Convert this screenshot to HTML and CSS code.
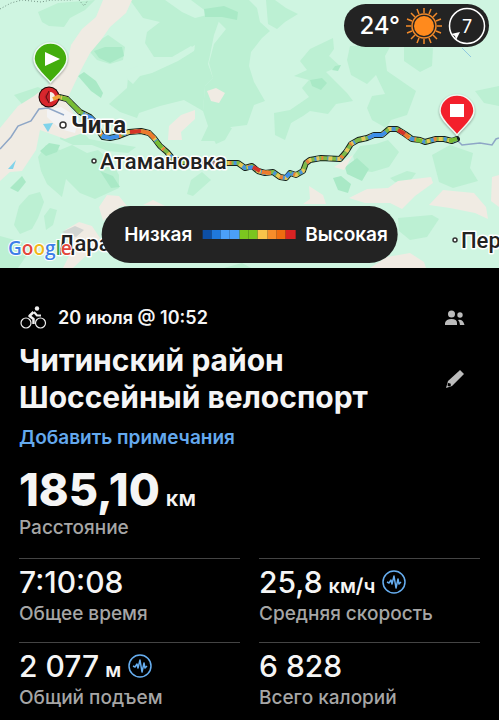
FILE: index.html
```html
<!DOCTYPE html>
<html lang="ru">
<head>
<meta charset="utf-8">
<meta name="viewport" content="width=device-width, initial-scale=1">
<title>Читинский район Шоссейный велоспорт</title>
<link rel="stylesheet" href="styles.css">
</head>
<body>
<section class="map" aria-label="Карта маршрута">
  <svg class="map-canvas" viewBox="0 0 499 268" preserveAspectRatio="xMidYMid slice">
    <defs>
      <path id="route" d="M54 98L59 97 67 99 73 105 80 112 90 117 96 123 99 131 103 137 110 138 119 136 129 132 141 131 149 133 154 138 160 146 167 152 172 158 183 162 205 164 226 163 238 163 245 168 252 166 258 171 265 173 273 172 280 177 286 178 290 173 296 175 303 171 306 163 310 160 321 158 340 159 346 152 351 144 358 140 367 138 374 135 382 135 389 129 397 129 405 134 412 139 420 140 425 142 436 139 444 139 452 141 457 139"/>
    </defs>
    <rect class="land" width="499" height="268"/>
    <g class="forest">
      <path d="M38 12L58 3 95 0 85 10 70 18 64 27 49 26 42 22Z"/>
      <path d="M130 0L165 0 182 12 195 18 215 13 219 21 214 35 210 55 208 64 213 78 205 86 203 111 184 100 160 106 139 113 137 118 120 112 109 104 127 88 128 77 138 74 151 69 179 59 195 49 191 46 172 57 154 57 145 43 147 32 160 22 143 18Z"/>
      <path d="M90 52L100 40 108 35 125 47 123 60 110 64 97 60Z"/>
      <path d="M191 0H249L257 8 260 22 270 31 262 38 251 52 249 66 254 82 265 101 254 105 247 125 231 127 220 141 201 141 208 126 203 111 205 86 213 78 209 63 214 44 226 29 215 18Z"/>
      <path d="M266 0L275 0 286 8 298 14 285 22 277 29 268 24Z"/>
      <path d="M310 49L333 38 334 49 329 56 340 66 326 72 334 80 347 93 353 101 336 104 328 114 310 111 303 116 291 123 285 140 275 135 274 113 290 110 309 97 302 88 309 80 294 76 307 70 300 61Z"/>
      <path d="M350 46L391 45 385 56 387 71 416 91 407 115 391 120 386 128 372 120 367 108 372 96 385 94 376 75 367 84 351 75 347 60Z"/>
      <path d="M404 47L433 48 432 66 420 72 404 61Z"/>
      <path d="M475 91L499 86V106L484 103Z"/>
      <path d="M14 95L38 87 46 91 37 101 22 104Z"/>
      <path d="M38 157L46 145 60 150 72 145 87 153 98 150 111 161 119 175 119 188 95 199 80 193 66 179 62 197 47 184 41 171Z"/>
      <path d="M62 131L78 127 89 139 105 142 136 147 128 153 108 151 92 145 73 145 60 139Z"/>
      <path d="M202 172L211 180 193 196 187 194 191 180Z"/>
      <path d="M208 128H232L225 140 216 144Z"/>
      <path d="M19 206L29 195 40 192 44 202 38 218 32 229 20 234 14 225Z"/>
      <path d="M44 216L50 208 57 210 53 225 46 230Z"/>
      <path d="M0 236L22 242 27 255 18 268H0Z"/>
      <path d="M353 156L360 146 376 144 388 140 399 152 389 167 372 172 357 170Z"/>
      <path d="M432 155L450 145 473 153 470 168 478 181 453 188 439 182Z"/>
      <path d="M398 218L432 215 439 219 427 237 410 240 399 231Z"/>
      <path d="M390 178L407 171 416 173 411 180 395 182Z"/>
      <path d="M224 268L242 263 251 268Z"/>
    </g>
    <g class="forest-deep">
      <path d="M94 51L105 47 122 47 124 56 110 63 99 58Z"/>
      <path d="M78 76L84 72 96 81 103 93 101 98 91 91Z"/>
      <path d="M204 9L224 6 238 12 237 20 222 17 205 17Z"/>
      <path d="M310 80L322 78 327 83 321 90 312 86Z"/>
      <path d="M345 167L357 158 369 169 362 181 347 174Z"/>
      <path d="M333 178L341 176 351 184 348 193 338 190Z"/>
      <path d="M40 151L49 143 60 145 57 152 46 156Z"/>
      <path d="M10 188L22 176 26 182 18 192Z"/>
      <path d="M100 171L113 176 120 187 111 188Z"/>
      <path d="M335 66L341 65 338 71 332 70Z"/>
    </g>
    <g class="built">
      <path d="M103 0H132L126 13 110 27 101 40 90 53 81 70 71 91 66 102 77 118 86 132 65 139 40 130 36 150 22 171 10 172 0 181V128L18 106 34 96 53 81 67 64 71 45 82 29 96 17Z"/>
      <path d="M207 91L216 88 225 93 219 103 211 101Z"/>
      <path d="M195 110L195 119 181 132 182 140 168 140 169 126 181 115Z"/>
      <path d="M99 207L107 195 119 196 127 206H121L103 221Z"/>
      <path d="M65 230L79 222 92 226 100 238 92 250 73 268H63L72 250Z"/>
      <path d="M143 205L153 200 165 206Z"/>
      <path d="M309 186L323 195 326 204 303 204 310 199Z"/>
      <path d="M349 198L367 189 388 188 398 181 431 177 433 183 415 196 402 209 390 203 365 203Z"/>
      <path d="M429 205L443 190 474 193 486 207 488 219 475 213 450 208Z"/>
      <path d="M492 177L499 175V207L491 201Z"/>
      <path d="M334 167L353 155 344 170Z"/>
      <path d="M387 257L410 253 424 262 426 268H370Z"/>
    </g>
    <path class="clearing" d="M127 70L138 66 150 68 179 55 195 45 194 51 178 61 152 73 140 76 133 84 126 78Z"/>
    <path class="town" d="M47 110L61 107 79 118 75 133 60 129 47 117Z"/>
    <path class="rock" d="M62 232L75 226 84 230 76 237Z"/>
    <g class="water">
      <path d="M43 124L53 123 48 132Z"/>
      <path d="M8 169L16 160 13 169Z"/>
    </g>
    <path class="river" d="M0 149L11 137 18 126 31 121 39 109 48 108 64 115"/>
    <path class="river" d="M457 140L462 145 480 143 492 145 496 139 499 138"/>
    <path class="stream" d="M462 48L471 57"/>
    <path class="boundary" d="M0 9L11 3 22 0 41 2 52 0 73 0M79 0L84 6 88 0"/>

    <use class="route-edge" href="#route"/>
    <use class="route-base" href="#route"/>
    <use class="route-blue" href="#route"/>
    <use class="route-yellow" href="#route"/>
    <use class="route-orange" href="#route"/>
    <g class="route-span">
      <path class="c-green" d="M62 98L67 99 73 105 80 112M156 141L162 148M416 140L422 141M449 141L457 139"/>
      <path class="c-blue" d="M85 115L90 117 94 121M102 136L110 138 119 136M248 168L253 167M286 177L290 173M368 138L374 135 382 135 386 132"/>
      <path class="c-red" d="M94 121L97 124M130 132L141 131M253 167L260 171M398 130L405 134"/>
      <path class="c-orange" d="M141 131L149 133 154 138M262 172L271 173M405 134L409 138"/>
    </g>

    <g class="start">
      <circle class="start-edge" cx="49" cy="97" r="10.500"/>
      <circle class="start-ring" cx="49" cy="97" r="7"/>
      <path class="start-core" d="M49 91L46 97 49 103"/>
      <path class="start-half" d="M50 92A5 5 0 0 1 50 102Z"/>
      <path class="start-tail" d="M53 99L60 96"/>
    </g>
    <g class="pin">
      <path class="pin-green" d="M50.500 82.500C46 77 34 68 34 59A16.500 16 0 0 1 67 59C67 68 55 77 50.500 82.500Z"/>
      <path class="pin-mark" d="M45 52L60 59 45 66Z"/>
    </g>
    <g class="pin">
      <path class="pin-red" d="M457 135C453 129 440 120 440 111A17 16 0 0 1 474 111C474 120 461 129 457 135Z"/>
      <path class="pin-mark" d="M450 104H464V117H450Z"/>
    </g>

    <circle class="place-dot" cx="63" cy="125" r="3"/>
    <circle class="place-dot" cx="94" cy="161" r="2"/>
    <circle class="place-dot" cx="455" cy="240" r="2"/>
    <text class="place place-city" x="71" y="133">Чита</text>
    <text class="place" x="100" y="169">Атамановка</text>
    <text class="place" x="58" y="251">Дара</text>
    <text class="place" x="461" y="248">Пер</text>
    <text class="google" x="8" y="255"><tspan class="g-blue">G</tspan><tspan class="g-red">o</tspan><tspan class="g-yellow">o</tspan><tspan class="g-blue">g</tspan><tspan class="g-green">l</tspan><tspan class="g-red">e</tspan></text>
  </svg>

  <div class="weather">
    <span>24°</span>
    <svg class="sun" viewBox="-19 -19 38 38">
      <circle class="sun-core" r="10"/>
      <circle class="sun-ring" r="12"/>
      <path class="sun-rays" d="M0-13V-18M0 13V18M-13 0H-18M13 0H18M5-12L7-17M-5-12L-7-17M5 12L7 17M-5 12L-7 17M12-5L17-7M12 5L17 7M-12-5L-17-7M-12 5L-17 7M9-9L13-13M-9-9L-13-13M9 9L13 13M-9 9L-13 13"/>
    </svg>
    <svg class="wind" viewBox="-19 -19 38 38">
      <circle class="wind-ring" r="17.500"/>
      <path class="wind-arrow" d="M-16 8L-7 6-11 14-12 10Z"/>
      <text class="wind-speed" x="0" y="7">7</text>
    </svg>
  </div>

  <div class="legend">
    <span>Низкая</span>
    <div class="scale"><i class="s1"></i><i class="s2"></i><i class="s3"></i><i class="s3"></i><i class="s4"></i><i class="s4"></i><i class="s5"></i><i class="s6"></i><i class="s7"></i><i class="s8"></i></div>
    <span>Высокая</span>
  </div>
</section>

<main class="details">
  <div class="row meta">
    <svg class="bike" viewBox="0 0 28 24">
      <circle class="wheel" cx="7" cy="17" r="5"/>
      <circle class="wheel" cx="21.500" cy="17" r="5"/>
      <circle class="rider" cx="18" cy="2.500" r="2.200"/>
      <path class="torso" d="M14.500 6L10.500 10 14.500 13V18"/>
      <path class="arm" d="M15 6L18 9.500H22"/>
    </svg>
    <span class="date">20 июля @ 10:52</span>
    <button class="icon-button" aria-label="Участники">
      <svg class="people" viewBox="0 0 20 16"><circle cx="6.500" cy="4" r="3.500"/><circle cx="15" cy="5" r="2.700"/><path d="M0 15V13Q1 9 6.500 9T12 13V15ZM13 10Q18 9 19.500 15H15Q15 12 13 10Z"/></svg>
    </button>
  </div>
  <div class="row heading">
    <h1>Читинский район Шоссейный велоспорт</h1>
    <button class="icon-button" aria-label="Изменить">
      <svg class="pencil" viewBox="0 0 20 20"><path fill-rule="evenodd" d="M1 19L3 12 14 2 15 1 19 5 18 6 7 17ZM3 14L2.500 16.500 4 17.500 6 16.500 5.500 14.500Z"/></svg>
    </button>
  </div>
  <a class="notes" href="#notes">Добавить примечания</a>
  <div class="stat distance">
    <div class="value">185,10<small>км</small></div>
    <div class="label">Расстояние</div>
  </div>
  <div class="stats">
    <div class="stat">
      <div class="value">7:10:08</div>
      <div class="label">Общее время</div>
    </div>
    <div class="stat">
      <div class="value">25,8<small>км/ч</small><button class="pulse" aria-label="График скорости"><svg viewBox="0 0 24 24"><circle cx="12" cy="12" r="11"/><path d="M5 12L7 13 9 10 10 14 12 6 14 18 16 9 17 14 19 12"/></svg></button></div>
      <div class="label">Средняя скорость</div>
    </div>
    <div class="stat">
      <div class="value">2 077<small>м</small><button class="pulse" aria-label="График подъема"><svg viewBox="0 0 24 24"><circle cx="12" cy="12" r="11"/><path d="M5 12L7 13 9 10 10 14 12 6 14 18 16 9 17 14 19 12"/></svg></button></div>
      <div class="label">Общий подъем</div>
    </div>
    <div class="stat">
      <div class="value">6 828</div>
      <div class="label">Всего калорий</div>
    </div>
  </div>
</main>
</body>
</html>
```
FILE: styles.css
```css
* { box-sizing: border-box; }
body {
  margin: 0;
  background: #000;
  color: #f5f5f5;
  font-family: Inter, "Noto Sans", sans-serif;
  overflow-x: hidden;
}
button { padding: 0; border: 0; background: none; color: inherit; }
svg { display: block; }

/* Map */
.map { position: relative; overflow: hidden; }
.map-canvas { width: 100%; }
.land, .clearing { fill: #cff5e1; }
.forest { fill: #bcf0d3; }
.forest-deep { fill: #a9e9c6; }
.built { fill: #f0ebe3; }
.town { fill: #f2f3f4; }
.rock { fill: #d2d5d2; }
.water { fill: #80d3ea; }
.river, .stream { fill: none; stroke: #8ea6c6; stroke-width: 1.5; }
.stream { stroke: #90c9df; stroke-width: 1; }
.boundary { fill: none; stroke: #759486; stroke-dasharray: 1 2; }

.route-edge, .route-base, .route-blue, .route-yellow, .route-orange, .route-span {
  fill: none;
  stroke-linejoin: round;
  stroke-width: 4;
}
.route-edge { stroke: #15201b; stroke-width: 6; stroke-linecap: round; }
.route-base { stroke: #7fb94a; }
.route-blue { stroke: #4b94d8; stroke-dasharray: 5 8 3 6; }
.route-yellow { stroke: #e6c657; stroke-dasharray: 3 9 4 5; stroke-dashoffset: 5; }
.route-orange { stroke: #e88239; stroke-dasharray: 2 18 3 13; stroke-dashoffset: 9; }
.c-blue { stroke: #3d8ee8; }
.c-red { stroke: #d53227; }
.c-orange { stroke: #ec7a2e; }
.c-green { stroke: #77bc35; }

.start-edge { fill: #1c0506; }
.start-ring { fill: #c2202a; stroke: #d8262c; stroke-width: 5; }
.start-core { fill: none; stroke: #5a0d10; stroke-width: 1; }
.start-half { fill: #f8eee6; }
.start-tail { fill: none; stroke: #f0a33a; stroke-width: 4; }
.pin { stroke: #eefaf2; stroke-width: 1.5; filter: drop-shadow(0 1px 1px #0005); }
.pin-green { fill: #43ad0c; }
.pin-red { fill: #f3202c; }
.pin-mark { fill: #fff; stroke: none; }

.place-dot { fill: #fff; stroke: #333; stroke-width: 1.5; }
.place {
  fill: #222;
  stroke: #fff;
  stroke-width: 3;
  stroke-linejoin: round;
  paint-order: stroke;
  font: 500 22px Roboto, sans-serif;
}
.place-city { font-size: 24px; font-weight: 700; }
.google {
  font: 600 19px "Open Sans", sans-serif;
  stroke: #fff;
  stroke-width: 2;
  paint-order: stroke;
}
.g-blue { fill: #3e7fe8; }
.g-red { fill: #e2463b; }
.g-yellow { fill: #f0b91b; }
.g-green { fill: #3ba757; }

.weather, .legend {
  position: absolute;
  display: flex;
  align-items: center;
  background: #232323;
  color: #fff;
  white-space: nowrap;
}
.weather {
  top: 4px;
  right: 10px;
  height: 43px;
  padding: 0 3px 0 15px;
  gap: 5px;
  border-radius: 22px;
  font-size: 24px;
  font-weight: 500;
}
.sun, .wind { width: 38px; height: 38px; }
.sun-core { fill: #ff8a1d; }
.sun-ring, .sun-rays { fill: none; stroke: #f28a2a; stroke-width: 1.5; }
.wind-ring { fill: none; stroke: #fff; stroke-width: 1.5; }
.wind-arrow { fill: #fff; }
.wind-speed { fill: #fff; font-size: 18px; font-weight: 400; text-anchor: middle; }

.legend {
  left: 50%;
  bottom: 5px;
  height: 57px;
  padding: 0 10px 0 23px;
  gap: 10px;
  border-radius: 29px;
  transform: translateX(-50%);
  font-size: 19px;
  font-weight: 600;
}
.scale { display: flex; width: 93px; height: 9px; }
.scale i { flex: 1; }
.s1 { background: #0d4fa5; }
.s2 { background: #1f78dc; }
.s3 { background: #4b9ff7; }
.s4 { background: #7bc51f; }
.s5 { background: #f9c34a; }
.s6 { background: #f68d2a; }
.s7 { background: #ee6b10; }
.s8 { background: #d92323; }

/* Activity details */
.details { padding: 37px 19px 0; }
.row { display: flex; align-items: center; }
.meta { height: 26px; gap: 11px; }
.bike { width: 28px; height: 24px; }
.wheel { fill: none; stroke: #eee; stroke-width: 1.2; }
.rider { fill: #eee; }
.torso, .arm { fill: none; stroke: #eee; stroke-width: 2; stroke-linejoin: round; }
.torso { stroke-width: 2.5; }
.date { font-size: 18px; font-weight: 600; line-height: 24px; }
.icon-button {
  display: grid;
  place-items: center;
  flex: none;
  width: 20px;
  margin: 0 15px 0 auto;
}
.icon-button svg { width: 20px; fill: #bcbcbc; }
.heading { margin-top: 11px; }
h1 {
  max-width: 380px;
  margin: 0;
  font-size: 30px;
  font-weight: 700;
  line-height: 37px;
}
.notes {
  display: block;
  margin-top: 10px;
  color: #64a9ee;
  font-size: 19px;
  font-weight: 600;
  line-height: 24px;
  text-decoration: none;
}
.value {
  display: flex;
  align-items: baseline;
  height: 36px;
  font-size: 30px;
  font-weight: 500;
  line-height: 36px;
  white-space: nowrap;
}
.value small { margin-left: 6px; font-size: 20px; font-weight: 600; }
.distance .value { height: 48px; font-size: 45px; font-weight: 800; line-height: 48px; }
.distance small { font-size: 22px; }
.label { margin-top: 2px; color: #a6a6a6; font-size: 19px; font-weight: 500; line-height: 24px; }
.distance { margin-top: 16px; }
.stats {
  display: grid;
  grid-template-columns: 1fr 1fr;
  column-gap: 19px;
  margin-top: 18px;
}
.stats .stat { height: 84px; padding-top: 5px; border-top: 1px solid #444; }
.pulse { align-self: center; width: 24px; height: 24px; margin-left: 7px; }
.pulse svg { fill: none; stroke: #67aef0; stroke-width: 1.5; stroke-linejoin: round; }
```
